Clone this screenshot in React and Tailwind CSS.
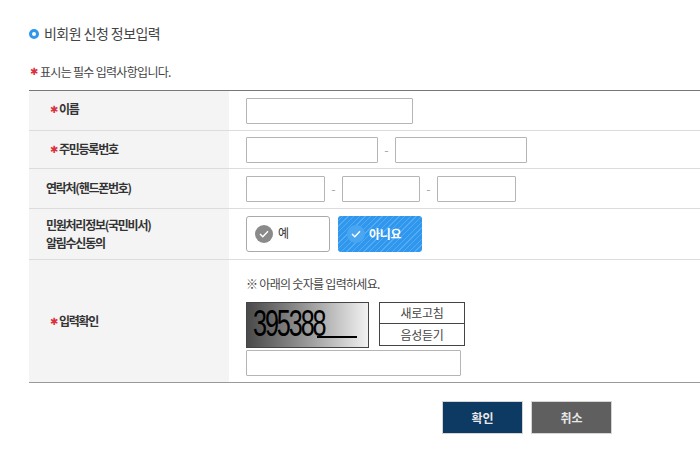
const Star = ({ className = 'mr-[2px]' }) => (
  <span className={`inline-block w-[7px] text-center text-[#d9333f] text-[10px] font-normal leading-none align-[1px] font-['DejaVu_Sans',sans-serif] ${className}`}>✱</span>
);

const Field = ({ className = '' }) => (
  <input type="text" className={`h-[26px] bg-white border border-[#b5b5b5] rounded-[1px] ${className}`} />
);

const Dash = () => <span className="mx-[6px] w-[5px] flex justify-center text-[#888] text-[13px] font-light">-</span>;

const Row = ({ label, className, children }) => (
  <div className={`flex border-b border-[#dcdcdc] ${className}`}>
    <div className="w-[200px] shrink-0 bg-[#f4f4f4] flex items-center text-[12px] leading-[18px] font-bold text-[#333] tracking-[-1.25px]">
      {label}
    </div>
    <div className="flex-1 pl-[17px] flex items-center">{children}</div>
  </div>
);

const CheckCircle = ({ bg }) => (
  <span className={`w-[18px] h-[18px] rounded-full flex items-center justify-center ${bg}`}>
    <svg width="10" height="8" viewBox="0 0 10 8" fill="none" stroke="white" strokeWidth="1.4">
      <path d="M1 4l2.8 2.8L9 1.2" />
    </svg>
  </span>
);

export default function App() {
  return (
    <div className="w-[700px] h-[472px] overflow-hidden bg-white pl-[29px] font-['Noto_Sans_CJK_KR','Noto_Sans',sans-serif] text-[#333]">
      <h2 className="flex items-center gap-[5px] pt-[13px] h-[54px] text-[14px] font-normal text-[#444] tracking-[-0.55px]">
        <span className="w-[10px] h-[10px] rounded-full border-[3px] border-[#2f97ee]" />
        비회원 신청 정보입력
      </h2>
      <p className="mt-[9px] h-[18px] flex items-center text-[12px] text-[#444] tracking-[-0.7px]">
        <Star className="mr-[3px] ml-px" />표시는 필수 입력사항입니다.
      </p>
      <div className="mt-[9px] border-t border-[#777]">
        <Row label={<span className="pl-[21px] pb-[3px]"><Star />이름</span>} className="h-[40px]">
          <Field className="w-[167px]" />
        </Row>
        <Row label={<span className="pl-[21px] pb-[2px]"><Star />주민등록번호</span>} className="h-[38px]">
          <Field className="w-[132px]" />
          <Dash />
          <Field className="w-[132px]" />
        </Row>
        <Row label={<span className="pl-[17px] pb-[2px]">연락처(핸드폰번호)</span>} className="h-[40px]">
          <Field className="w-[79px]" />
          <Dash />
          <Field className="w-[78px]" />
          <Dash />
          <Field className="w-[79px]" />
        </Row>
        <Row label={<span className="pl-[17px]">민원처리정보(국민비서)<br />알림수신동의</span>} className="h-[51px]">
          <div className="flex gap-2">
            <button className="w-[84px] h-[36px] border border-[#aaa] rounded-[3px] bg-white flex items-center pl-2 gap-[5px] text-[12px] text-[#333]">
              <CheckCircle bg="bg-[#8a8a8a]" />
              <span className="-mt-[2px]">예</span>
            </button>
            <button className="w-[84px] h-[36px] rounded-[3px] bg-[repeating-linear-gradient(135deg,#2f97ee_0px,#2f97ee_3px,#55abf2_3px,#55abf2_4px)] flex items-center pl-[9px] gap-[4px] text-[12px] font-bold text-white tracking-[-0.3px]">
              <CheckCircle bg="bg-[#4ba6f1]" />
              <span className="-mt-px">아니요</span>
            </button>
          </div>
        </Row>
        <div className="flex h-[123px] border-b border-[#999]">
          <div className="w-[200px] shrink-0 bg-[#f4f4f4] flex items-center text-[12px] font-bold text-[#333] tracking-[-1.25px]">
            <span className="pl-[21px]"><Star />입력확인</span>
          </div>
          <div className="flex-1 pl-[17px] pt-[14px]">
            <p className="h-[20px] flex items-center text-[12px] text-[#444] tracking-[-0.7px]">※ 아래의 숫자를 입력하세요.</p>
            <div className="flex mt-[8px] gap-[10px]">
              <div className="relative w-[123px] h-[46px] border border-[#444] bg-gradient-to-r from-[#4a4a4a] to-[#f2f2f2] overflow-hidden">
                <span className="absolute left-[6px] top-[3px] origin-left scale-x-[0.7] text-[36px] leading-[36px] text-black font-['Liberation_Sans',sans-serif] tracking-[-3px]">395388</span>
                <span className="absolute left-[70px] top-[33px] w-[40px] h-[2px] bg-black" />
              </div>
              <div className="flex flex-col">
                <button className="w-[86px] h-[22px] border border-[#444] bg-white text-[12px] text-[#444] tracking-[-0.3px]">새로고침</button>
                <button className="w-[86px] h-[23px] -mt-px border border-[#444] bg-white text-[12px] text-[#444] tracking-[-0.3px]">음성듣기</button>
              </div>
            </div>
            <Field className="block w-[215px] mt-[2px]" />
          </div>
        </div>
      </div>
      <div className="flex gap-[8px] pl-[413px] mt-[18px]">
        <button className="w-[81px] h-[33px] bg-[#0d3a63] border border-[#d5d5d5] text-[12px] font-bold text-[#e8e8e8]">확인</button>
        <button className="w-[81px] h-[33px] bg-[#5f5f5f] border border-[#d5d5d5] text-[12px] font-bold text-[#e8e8e8]">취소</button>
      </div>
    </div>
  );
}
